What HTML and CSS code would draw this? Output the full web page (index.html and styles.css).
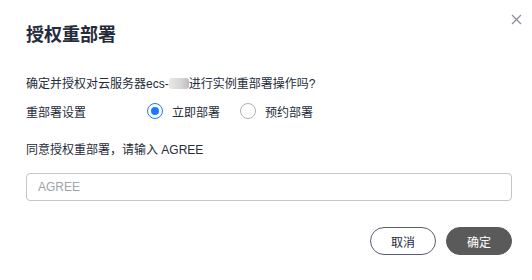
FILE: index.html
```html
<!DOCTYPE html>
<html lang="zh-CN">
<head>
    <meta charset="UTF-8">
    <meta name="viewport" content="width=device-width, initial-scale=1.0">
    <title>授权重部署</title>
    <link rel="stylesheet" href="styles.css">
</head>
<body>
    <div class="dialog">
        <span class="close">
            <svg width="11" height="11" viewBox="0 0 11 11"><path d="M1 1L10 10M10 1L1 10" stroke="#8a8e99" stroke-width="1.2" fill="none"/></svg>
        </span>
        <h1 class="title">授权重部署</h1>
        <p class="desc">确定并授权对云服务器ecs-<span class="masked"></span>进行实例重部署操作吗?</p>
        <div class="row">
            <span class="label">重部署设置</span>
            <label class="radio checked"><span class="dot"></span>立即部署</label>
            <label class="radio"><span class="dot"></span>预约部署</label>
        </div>
        <p class="hint">同意授权重部署，请输入 AGREE</p>
        <input class="input" type="text" placeholder="AGREE">
        <div class="footer">
            <button class="btn cancel">取消</button>
            <button class="btn ok">确定</button>
        </div>
    </div>
</body>
</html>
```

FILE: styles.css
```css
body {
    margin: 0;
    background: #fff;
    font-family: "Liberation Sans", "Noto Sans CJK SC", sans-serif;
    color: #252b3a;
}
.dialog {
    position: relative;
    width: 532px;
    height: 280px;
    box-sizing: border-box;
    padding: 22px 20px 0 26px;
}
.close {
    position: absolute;
    top: 14px;
    right: 10px;
    width: 11px;
    height: 11px;
    display: flex;
}
.title {
    margin: 0;
    font-size: 18px;
    line-height: 26px;
    font-weight: bold;
}
.desc {
    margin: 26px 0 0;
    font-size: 12px;
    line-height: 20px;
}
.masked {
    display: inline-block;
    width: 20px;
    height: 11px;
    vertical-align: -1px;
    border-radius: 3px;
    background: linear-gradient(to right, #e8e8e8, #d6d6d6 60%, #bdbdbd);
    filter: blur(0.6px);
}
.row {
    display: flex;
    align-items: center;
    height: 24px;
    margin-top: 5px;
    font-size: 12px;
}
.label {
    width: 121px;
}
.radio {
    display: flex;
    align-items: center;
    gap: 9px;
    margin-right: 20px;
}
.dot {
    width: 16px;
    height: 16px;
    box-sizing: border-box;
    border: 1px solid #adb0b8;
    border-radius: 50%;
    display: flex;
    align-items: center;
    justify-content: center;
}
.checked .dot {
    border-color: #1a7cff;
}
.checked .dot::after {
    content: "";
    width: 8px;
    height: 8px;
    border-radius: 50%;
    background: #1a7cff;
}
.hint {
    margin: 17px 0 0;
    font-size: 12px;
    line-height: 20px;
}
.input {
    display: block;
    width: 100%;
    height: 28px;
    box-sizing: border-box;
    margin-top: 13px;
    padding: 0 11px;
    border: 1px solid #c2c5cc;
    border-radius: 4px;
    font-family: inherit;
    font-size: 12px;
    color: #252b3a;
}
.input::placeholder {
    color: #a0a3aa;
}
.footer {
    display: flex;
    justify-content: flex-end;
    gap: 10px;
    margin-top: 26px;
}
.btn {
    width: 66px;
    height: 28px;
    border-radius: 14px;
    font-family: inherit;
    font-size: 12px;
    cursor: pointer;
}
.cancel {
    background: #fff;
    border: 1px solid #575d6c;
    color: #252b3a;
}
.ok {
    background: #5a5a5a;
    border: 1px solid #5a5a5a;
    color: #fff;
}
```
